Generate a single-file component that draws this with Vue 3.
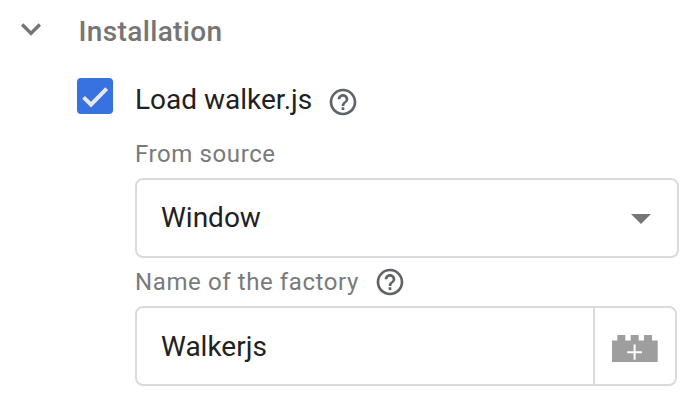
<script setup>
import { ref } from 'vue'

const open = ref(true)
const loadLibrary = ref(true)
const source = ref('Window')
const factory = ref('Walkerjs')
const helpPath =
  'M11 18h2v-2h-2v2zm1-16C6.48 2 2 6.48 2 12s4.48 10 10 10 10-4.48 10-10S17.52 2 12 2zm0 18c-4.41 0-8-3.59-8-8s3.59-8 8-8 8 3.59 8 8-3.59 8-8 8zm0-14c-2.21 0-4 1.79-4 4h2c0-1.1.9-2 2-2s2 .9 2 2c0 2-3 1.75-3 5h2c0-2.25 3-2.5 3-5 0-2.21-1.79-4-4-4z'
</script>

<template>
  <section class="panel">
    <header class="heading" @click="open = !open">
      <svg class="chevron" viewBox="0 0 24 24"><path d="M16.59 8.59L12 13.17 7.41 8.59 6 10l6 6 6-6z" /></svg>
      <span class="title">Installation</span>
    </header>
    <div v-if="open" class="content">
      <div class="check-row">
        <span class="checkbox" role="checkbox" :aria-checked="loadLibrary" @click="loadLibrary = !loadLibrary">
          <svg v-if="loadLibrary" viewBox="0 0 36 36"><path d="M6.6 19.4L14 26.6L29.7 10.7" /></svg>
        </span>
        <span class="check-label">Load walker.js</span>
        <svg class="help" viewBox="0 0 24 24"><path :d="helpPath" /></svg>
      </div>
      <div class="fields">
        <div class="label source-label">From source</div>
        <div class="box select">
          <span class="value">{{ source }}</span>
          <svg class="arrow" viewBox="0 0 20 10"><path d="M0 0h20L10 10z" /></svg>
        </div>
        <div class="label factory-label">
          <span class="factory-text">Name of the factory</span>
          <svg class="help" viewBox="0 0 24 24"><path :d="helpPath" /></svg>
        </div>
        <div class="box input">
          <span class="value">{{ factory }}</span>
          <span class="picker">
            <svg class="brick" viewBox="0 0 46 27">
              <path class="body" d="M0 5.5h5.3V0h8v5.5h5.4V0h8v5.5H32V0h8v5.5h5.7V27H0z" />
              <path class="plus" d="M22.6 9.5v15.3M15.2 17.2h14.8" />
            </svg>
          </span>
        </div>
      </div>
    </div>
  </section>
</template>

<style>
body {
  background: #fff;
}
</style>

<style scoped>
.panel {
  box-sizing: border-box;
  width: 696px;
  height: 400px;
  overflow: hidden;
  font-family: Roboto, sans-serif;
  font-size: 28px;
  color: #212121;
}
.heading {
  display: flex;
  align-items: center;
  height: 62px;
  padding-left: 11px;
  color: #757575;
}
.chevron {
  width: 40px;
  height: 40px;
  margin: -4px 27.6px 0 0;
  fill: #757575;
}
.title {
  font-weight: 500;
  letter-spacing: 0.35px;
}
.content {
  padding-left: 77px;
}
.check-row {
  display: flex;
  align-items: center;
  height: 36px;
  margin-top: 16px;
}
.checkbox {
  width: 36px;
  height: 36px;
  margin-right: 22px;
  border-radius: 4px;
  background: #3871e0;
}
.checkbox svg {
  display: block;
  width: 36px;
  height: 36px;
  fill: none;
  stroke: #e8e8ea;
  stroke-width: 4;
}
.check-label {
  width: 192px;
  margin-top: 7px;
  white-space: nowrap;
}
.help {
  flex: none;
  width: 32px;
  height: 32px;
  fill: #5f6368;
}
.check-row .help {
  margin-top: 12px;
}
.fields {
  padding-left: 58px;
}
.label {
  display: flex;
  align-items: center;
  color: #7a7a7a;
  font-size: 24px;
  letter-spacing: 0.6px;
}
.source-label {
  height: 48px;
  padding-top: 16px;
}
.factory-label {
  height: 48px;
}
.factory-text {
  width: 238.6px;
  white-space: nowrap;
}
.box {
  box-sizing: border-box;
  display: flex;
  align-items: center;
  justify-content: space-between;
  height: 80px;
  border: 2px solid #dadbe0;
  border-radius: 8px;
  padding-left: 24px;
}
.select {
  width: 544px;
  padding-right: 26px;
}
.select .value {
  margin-top: -2px;
}
.arrow {
  width: 20px;
  height: 10px;
  margin-top: 2px;
  fill: #757575;
}
.input {
  width: 542px;
}
.picker {
  box-sizing: border-box;
  display: flex;
  align-items: center;
  width: 82px;
  height: 76px;
  padding: 5px 0 0 17px;
  border-left: 2px solid #dadbe0;
}
.brick {
  width: 46px;
  height: 27px;
}
.body {
  fill: #9e9e9e;
}
.plus {
  fill: none;
  stroke: #fff;
  stroke-width: 2;
}
</style>
